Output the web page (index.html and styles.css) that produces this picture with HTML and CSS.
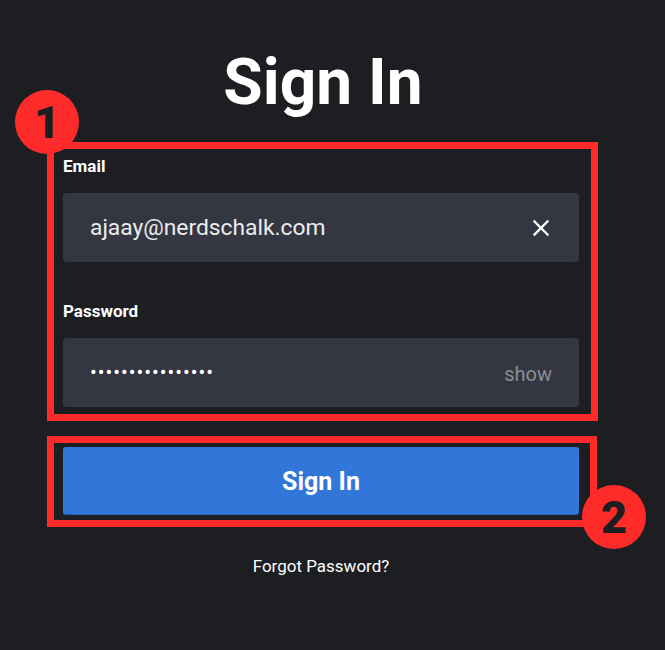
FILE: index.html
```html
<!DOCTYPE html>
<html lang="en">
<head>
    <meta charset="UTF-8">
    <meta name="viewport" content="width=device-width, initial-scale=1.0">
    <title>Sign In</title>
    <link rel="stylesheet" href="styles.css">
</head>
<body>

<div class="page">
    <div class="signin">
        <h1>Sign In</h1>

        <label class="field-label">Email</label>
        <div class="field">
            <span class="field-value">ajaay@nerdschalk.com</span>
            <svg class="clear" width="18" height="18" viewBox="0 0 18 18">
                <path d="M2.5 2.5 L15.5 15.5 M15.5 2.5 L2.5 15.5" stroke="#fff" stroke-width="2.3" stroke-linecap="square" fill="none"/>
            </svg>
        </div>

        <label class="field-label password-label">Password</label>
        <div class="field">
            <span class="dots">••••••••••••••••</span>
            <span class="show">show</span>
        </div>

        <button type="button" class="btn-signin">Sign In</button>

        <a class="forgot" href="#">Forgot Password?</a>
    </div>

    <!-- annotation overlays -->
    <div class="mark mark-fields"></div>
    <div class="mark mark-button"></div>
    <div class="badge badge-one">1</div>
    <div class="badge badge-two">2</div>
</div>

</body>
</html>
```

FILE: styles.css
```css
body {
    margin: 0;
    background-color: #1c1e22;
    font-family: Roboto, "Liberation Sans", sans-serif;
    color: #fff;
}
.page {
    position: relative;
    width: 665px;
    height: 650px;
}
.signin {
    width: 516px;
    margin-left: 63px;
    padding-top: 51px;
    display: flex;
    flex-direction: column;
}
.signin h1 {
    margin: 0 0 41px 0;
    font-size: 64px;
    line-height: 64px;
    font-weight: bold;
    text-align: center;
    padding-left: 4px;
}
.field-label {
    display: block;
    font-size: 17px;
    line-height: 20px;
    font-weight: bold;
    margin-bottom: 17px;
}
.password-label {
    margin-top: 39px;
}
.field {
    height: 69px;
    background-color: #343741;
    border-radius: 4px;
    display: flex;
    align-items: center;
    justify-content: space-between;
    padding: 0 27px;
    box-sizing: border-box;
}
.field-value {
    font-size: 22.8px;
    color: #ebecee;
}
.clear {
    margin-right: 2px;
}
.dots {
    font-size: 20px;
    letter-spacing: 1px;
    color: #fff;
    margin-top: -2px;
}
.show {
    font-size: 20px;
    color: #8a8d95;
    margin-top: 2px;
}
.btn-signin {
    margin-top: 40px;
    height: 68px;
    padding-top: 3px;
    border: none;
    border-bottom: 1px solid #2560b8;
    border-radius: 3px;
    background-color: #3176d9;
    color: #fff;
    font-family: inherit;
    font-size: 25px;
    font-weight: bold;
}
.forgot {
    margin-top: 41px;
    align-self: center;
    font-size: 17px;
    line-height: 20px;
    color: #fff;
    text-decoration: none;
}
.mark {
    position: absolute;
    border: 7px solid #ff2b2b;
    box-sizing: border-box;
}
.mark-fields {
    left: 47px;
    top: 142px;
    width: 551px;
    height: 279px;
}
.mark-button {
    left: 47px;
    top: 436px;
    width: 550px;
    height: 91px;
}
.badge {
    position: absolute;
    width: 64px;
    height: 64px;
    border-radius: 50%;
    background-color: #ff2b2b;
    color: #1c1e22;
    font-size: 45px;
    font-weight: 900;
    display: flex;
    align-items: center;
    justify-content: center;
}
.badge-one {
    left: 15px;
    top: 90px;
}
.badge-two {
    left: 582px;
    top: 485px;
}
```
